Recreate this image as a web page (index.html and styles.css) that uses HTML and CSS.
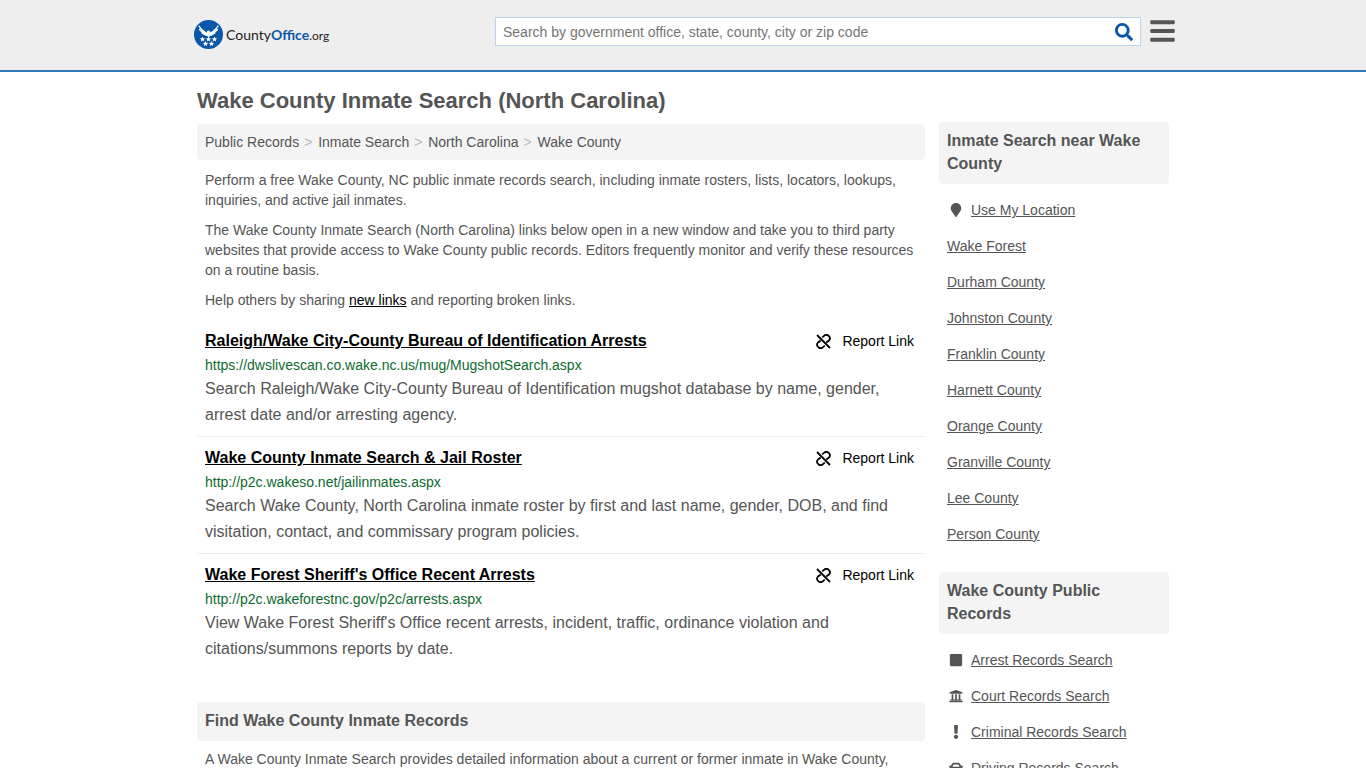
FILE: index.html
```html
<!DOCTYPE html>
<html lang="en">
<head>
<meta charset="UTF-8">
<meta name="viewport" content="width=device-width, initial-scale=1.0">
<title>Wake County Inmate Search (North Carolina)</title>
<link rel="stylesheet" href="styles.css">
</head>
<body>

<!-- shared icons -->
<svg class="sprite" aria-hidden="true">
  <symbol id="unlink" viewBox="0 0 15 15">
    <g fill="none" stroke="currentColor" stroke-width="1.8">
      <path d="M1 1l13 13"/>
      <path d="M6.200 3.400l1.800-1.500a3.400 3.400 0 0 1 5 4.600l-2.700 2"/>
      <path d="M8.800 11.600l-1.800 1.500a3.400 3.400 0 0 1-5-4.600l2.700-2"/>
    </g>
  </symbol>
</svg>

<header class="header">
  <div class="header-inner">
    <a class="logo" href="#" aria-label="CountyOffice.org">
      <svg class="logo-mark" viewBox="0 0 58 58" aria-hidden="true">
        <circle cx="29" cy="29" r="29" fill="#0a56a8"/>
        <g fill="none" stroke="#fff" stroke-width="2.6" stroke-linecap="round">
          <path d="M10 12c3 7 8 9 16 15M11 19c4 5 8 7 15 10M16 26c3 2 6 3 10 5"/>
          <path d="M48 12c-3 7-8 9-16 15M47 19c-4 5-8 7-15 10M42 26c-3 2-6 3-10 5"/>
        </g>
        <path fill="#fff" d="M26 22l4-1 3 3-1 8-3 3-3-4z"/>
        <g fill="#fff">
          <path id="star" d="M17 33l1.500 3.600 3.900.300-3 2.500 1 3.800-3.400-2-3.400 2 1-3.800-3-2.500 3.900-.300z"/>
          <use href="#star" x="12"/>
          <use href="#star" x="24"/>
          <use href="#star" x="6" y="9"/>
          <use href="#star" x="18" y="9"/>
        </g>
      </svg>
      <span class="logo-text">County<b>Office</b><span class="logo-tld">.org</span></span>
    </a>
    <form class="search" role="search">
      <input class="search-input" type="text" aria-label="Search" placeholder="Search by government office, state, county, city or zip code">
      <button class="search-btn" type="button" aria-label="Search">
        <svg viewBox="0 0 512 512" width="18" height="18"><path fill="currentColor" d="M505 442.700L405.300 343c-4.500-4.500-10.600-7-17-7H372c27.600-35.300 44-79.700 44-128C416 93.100 322.900 0 208 0S0 93.100 0 208s93.100 208 208 208c48.300 0 92.700-16.400 128-44v16.300c0 6.400 2.500 12.500 7 17l99.700 99.700c9.400 9.400 24.600 9.400 33.900 0l28.300-28.300c9.400-9.400 9.400-24.600.1-34zM208 336c-70.700 0-128-57.200-128-128 0-70.700 57.200-128 128-128 70.700 0 128 57.200 128 128 0 70.700-57.200 128-128 128z"/></svg>
      </button>
    </form>
    <button class="menu-btn" type="button" aria-label="Menu">
      <svg viewBox="0 0 448 512" width="25" height="28"><path fill="currentColor" d="M16 132h416c9 0 16-7 16-16V76c0-9-7-16-16-16H16C7 60 0 67 0 76v40c0 9 7 16 16 16zm0 160h416c9 0 16-7 16-16v-40c0-9-7-16-16-16H16c-9 0-16 7-16 16v40c0 9 7 16 16 16zm0 160h416c9 0 16-7 16-16v-40c0-9-7-16-16-16H16c-9 0-16 7-16 16v40c0 9 7 16 16 16z"/></svg>
    </button>
  </div>
</header>

<div class="container">
  <main class="main">
    <h1>Wake County Inmate Search (North Carolina)</h1>
    <nav class="crumbs" aria-label="Breadcrumb">
      <a href="#">Public Records</a><span>&gt;</span>
      <a href="#">Inmate Search</a><span>&gt;</span>
      <a href="#">North Carolina</a><span>&gt;</span>
      <a href="#">Wake County</a>
    </nav>

    <div class="intro">
      <p>Perform a free Wake County, NC public inmate records search, including inmate rosters, lists, locators, lookups, inquiries, and active jail inmates.</p>
      <p>The Wake County Inmate Search (North Carolina) links below open in a new window and take you to third party websites that provide access to Wake County public records. Editors frequently monitor and verify these resources on a routine basis.</p>
      <p>Help others by sharing <a href="#">new links</a> and reporting broken links.</p>
    </div>

    <div class="results">
      <article class="result">
        <div class="result-head">
          <a class="result-title" href="#">Raleigh/Wake City-County Bureau of Identification Arrests</a>
          <a class="report" href="#"><svg width="15" height="15"><use href="#unlink"/></svg>Report Link</a>
        </div>
        <div class="result-url">https://dwslivescan.co.wake.nc.us/mug/MugshotSearch.aspx</div>
        <p class="result-desc">Search Raleigh/Wake City-County Bureau of Identification mugshot database by name, gender, arrest date and/or arresting agency.</p>
      </article>
      <article class="result">
        <div class="result-head">
          <a class="result-title" href="#">Wake County Inmate Search &amp; Jail Roster</a>
          <a class="report" href="#"><svg width="15" height="15"><use href="#unlink"/></svg>Report Link</a>
        </div>
        <div class="result-url">http://p2c.wakeso.net/jailinmates.aspx</div>
        <p class="result-desc">Search Wake County, North Carolina inmate roster by first and last name, gender, DOB, and find visitation, contact, and commissary program policies.</p>
      </article>
      <article class="result">
        <div class="result-head">
          <a class="result-title" href="#">Wake Forest Sheriff's Office Recent Arrests</a>
          <a class="report" href="#"><svg width="15" height="15"><use href="#unlink"/></svg>Report Link</a>
        </div>
        <div class="result-url">http://p2c.wakeforestnc.gov/p2c/arrests.aspx</div>
        <p class="result-desc">View Wake Forest Sheriff's Office recent arrests, incident, traffic, ordinance violation and citations/summons reports by date.</p>
      </article>
    </div>

    <h2 class="box-title">Find Wake County Inmate Records</h2>
    <div class="about">
      <p>A Wake County Inmate Search provides detailed information about a current or former inmate in Wake County,</p>
    </div>
  </main>

  <aside class="sidebar">
    <h2 class="box-title">Inmate Search near Wake County</h2>
    <ul class="side-list">
      <li>
        <svg class="icon" viewBox="0 0 384 512"><path d="M172 502C27 291 0 269 0 192 0 86 86 0 192 0s192 86 192 192c0 77-27 99-172 310-10 13-30 13-40 0z"/></svg>
        <a href="#">Use My Location</a>
      </li>
      <li><a href="#">Wake Forest</a></li>
      <li><a href="#">Durham County</a></li>
      <li><a href="#">Johnston County</a></li>
      <li><a href="#">Franklin County</a></li>
      <li><a href="#">Harnett County</a></li>
      <li><a href="#">Orange County</a></li>
      <li><a href="#">Granville County</a></li>
      <li><a href="#">Lee County</a></li>
      <li><a href="#">Person County</a></li>
    </ul>

    <h2 class="box-title">Wake County Public Records</h2>
    <ul class="side-list">
      <li>
        <svg class="icon" viewBox="0 0 448 512"><path d="M400 32H48C21 32 0 53 0 80v352c0 27 21 48 48 48h352c27 0 48-21 48-48V80c0-27-21-48-48-48z"/></svg>
        <a href="#">Arrest Records Search</a>
      </li>
      <li>
        <svg class="icon" viewBox="0 0 512 512"><path d="M496 128v16a8 8 0 0 1-8 8h-24v12c0 7-5 12-12 12H60c-7 0-12-5-12-12v-12H24a8 8 0 0 1-8-8v-16a8 8 0 0 1 5-7l232-88a8 8 0 0 1 6 0l232 88a8 8 0 0 1 5 7zm-24 304H40c-13 0-24 11-24 24v16a8 8 0 0 0 8 8h464a8 8 0 0 0 8-8v-16c0-13-11-24-24-24zM96 192v192H60c-7 0-12 5-12 12v20h416v-20c0-7-5-12-12-12h-36V192h-64v192h-64V192h-64v192h-64V192H96z"/></svg>
        <a href="#">Court Records Search</a>
      </li>
      <li>
        <svg class="icon" viewBox="0 0 192 512"><path d="M176 432c0 44-36 80-80 80s-80-36-80-80 36-80 80-80 80 36 80 80zM25 25l14 272c1 13 11 23 24 23h66c13 0 23-10 24-23l14-272C167 11 156 0 143 0H49C36 0 25 11 25 25z"/></svg>
        <a href="#">Criminal Records Search</a>
      </li>
      <li>
        <svg class="icon" viewBox="0 0 512 512"><path fill-rule="evenodd" d="M500 176h-60l-17-42C406 92 366 64 320 64H193c-47 0-87 28-104 70l-17 42H12c-8 0-14 7-12 15l6 24c2 5 6 9 12 9h20c-13 12-22 29-22 48v48c0 16 6 31 16 42v54c0 18 14 32 32 32h32c18 0 32-14 32-32v-32h256v32c0 18 14 32 32 32h32c18 0 32-14 32-32v-54c10-11 16-26 16-42v-48c0-19-9-36-22-48h20c6 0 10-4 12-9l6-24c2-8-4-15-12-15zM148 158c7-18 25-30 45-30h127c19 0 37 12 44 30l20 50H128zM96 320c-19 0-32-13-32-32s13-32 32-32 48 29 48 48-29 16-48 16zm320 0c-19 0-48 3-48-16s29-48 48-48 32 13 32 32-13 32-32 32z"/></svg>
        <a href="#">Driving Records Search</a>
      </li>
    </ul>
  </aside>
</div>

</body>
</html>
```
FILE: styles.css
```css
* {
  box-sizing: border-box;
}

body {
  margin: 0;
  background: #fff;
  color: #555;
  font-family: "Liberation Sans", Arial, sans-serif;
  font-size: 14px;
  line-height: 20px;
}

h1, h2, p, ul {
  margin: 0;
  padding: 0;
}

a {
  color: inherit;
}

button {
  padding: 0;
  border: 0;
  background: none;
  cursor: pointer;
}

svg {
  display: block;
  flex: none;
}

.sprite {
  display: none;
}

/* Header */
.header {
  background: #eee;
  border-bottom: 2px solid #337ab7;
}

.header-inner {
  display: flex;
  align-items: flex-start;
  max-width: 984px;
  margin: 0 auto;
  padding: 17px 0 21px 3px;
}

.logo {
  display: flex;
  align-items: center;
  gap: 3px;
  padding-top: 3px;
  text-decoration: none;
}

.logo-mark {
  width: 29px;
  height: 29px;
}

.logo-text {
  padding-top: 2px;
  color: #222;
  font-family: Lato, sans-serif;
  font-size: 14px;
}

.logo-text b {
  color: #0a56a8;
}

.logo-tld {
  font-size: 12px;
}

.search {
  display: flex;
  flex: 0 1 646px;
  height: 29px;
  margin: 0 9px 0 auto;
  background: #fff;
  border: 1px solid #bcd4ea;
}

.search-input {
  flex: 1;
  min-width: 0;
  padding: 0 7px;
  border: 0;
  outline: 0;
  background: none;
  color: #555;
  font: inherit;
}

.search-input::placeholder {
  color: #757575;
}

.search-btn {
  padding: 0 7px;
  color: #0a56a8;
}

.menu-btn {
  color: #555;
}

/* Page columns */
.container {
  display: flex;
  align-items: flex-start;
  gap: 14px;
  max-width: 972px;
  margin: 0 auto;
}

.main {
  flex: 1;
  min-width: 0;
  padding-top: 16px;
}

.sidebar {
  flex: 0 0 230px;
  padding-top: 50px;
}

h1 {
  margin-bottom: 10px;
  font-size: 22px;
  line-height: 26px;
}

.crumbs {
  display: flex;
  flex-wrap: wrap;
  gap: 5px;
  padding: 8px;
  background: #f4f4f4;
  border-radius: 4px;
}

.crumbs a {
  text-decoration: none;
}

.crumbs span {
  min-width: 9px;
  color: #bbb;
}

.intro {
  padding: 10px 8px;
}

.intro p + p {
  margin-top: 10px;
}

.intro a {
  color: #000;
}

/* Results */
.results {
  margin-bottom: 32px;
}

.result {
  padding: 8px 11px 8px 8px;
}

.result + .result {
  border-top: 1px solid #eee;
}

.result-head {
  display: flex;
  justify-content: space-between;
  align-items: center;
  margin-bottom: 1px;
  color: #000;
  line-height: 26px;
}

.result-title {
  font-size: 16px;
  font-weight: bold;
}

.report {
  display: flex;
  align-items: center;
  gap: 11px;
  text-decoration: none;
}

.result-url {
  color: #0b6b2e;
  line-height: 21px;
}

.result-desc {
  font-size: 16px;
  line-height: 26px;
}

.box-title {
  padding: 7px 8px 9px;
  background: #f4f4f4;
  border-radius: 4px;
  font-size: 16px;
  line-height: 23px;
}

.about {
  padding: 8px;
}

/* Sidebar */
.side-list {
  margin: 8px 0 20px;
  padding: 0 8px;
  list-style: none;
}

.side-list li {
  display: flex;
  align-items: center;
  gap: 6px;
  height: 36px;
}

.icon {
  width: 18px;
  height: 14px;
  fill: #555;
}
```
